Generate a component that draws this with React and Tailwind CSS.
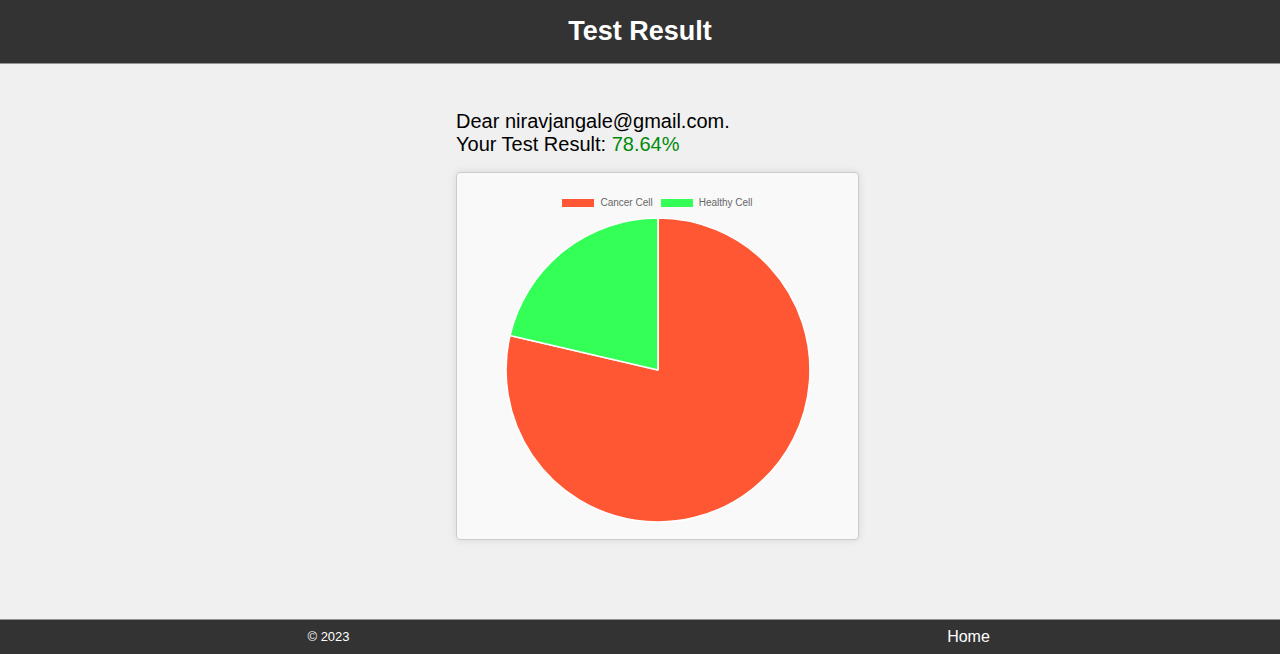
const slices = [
  { label: "Cancer Cell", value: 78.64, color: "#ff5733" },
  { label: "Healthy Cell", value: 21.36, color: "#33ff57" },
];

const RADIUS = 152;

function point(percent) {
  const angle = (percent / 100) * 2 * Math.PI;
  return `${RADIUS * Math.sin(angle)} ${-RADIUS * Math.cos(angle)}`;
}

function PieChart() {
  let start = 0;
  return (
    <svg
      viewBox="-153 -153 306 306"
      className="mx-auto block w-[306px] max-w-full"
      role="img"
      aria-label="Share of cancer and healthy cells"
    >
      {slices.map((slice) => {
        const from = start;
        start += slice.value;
        const large = slice.value > 50 ? 1 : 0;
        return (
          <path
            key={slice.label}
            d={`M0 0 L${point(from)} A${RADIUS} ${RADIUS} 0 ${large} 1 ${point(start)} Z`}
            fill={slice.color}
            stroke="#ffffff"
            strokeWidth="1.6"
            strokeLinejoin="bevel"
          />
        );
      })}
    </svg>
  );
}

export default function App() {
  return (
    <div className="flex min-h-screen flex-col bg-[#f0f0f0] font-['Liberation_Sans',Arial,sans-serif] text-black">
      <header className="border-b border-[#929292] bg-[#333333] py-4 text-center text-white">
        <h1 className="text-[27px] leading-[31px] font-bold">Test Result</h1>
      </header>

      <main className="flex flex-1 flex-col items-center pt-[46px] pl-[35px]">
        <div className="w-full max-w-[403px]">
          <p className="text-[20px] leading-[23px]">
            Dear niravjangale@gmail.com.
            <br />
            Your Test Result: <span className="text-[#008b0b]">78.64%</span>
          </p>

          <section className="mt-4 rounded border border-[#cccccc] bg-[#f9f9f9] pt-6 pb-4 shadow-[0_0_8px_rgba(0,0,0,0.1)]">
            <ul className="mb-2 flex justify-center gap-2 text-[10px] leading-3 text-[#666666]">
              {slices.map((slice) => (
                <li key={slice.label} className="flex items-center gap-1.5">
                  <svg className="h-2 w-8" aria-hidden="true">
                    <rect width="100%" height="100%" fill={slice.color} />
                  </svg>
                  {slice.label}
                </li>
              ))}
            </ul>
            <PieChart />
          </section>
        </div>
      </main>

      <footer className="grid grid-cols-2 items-center border-t border-[#929292] bg-[#333333] py-[5px] text-center leading-6 text-white">
        <p className="pl-[17px] text-[13px]">© 2023</p>
        <p className="pl-[17px] text-[16px]">
          <a href="#home">Home</a>
        </p>
      </footer>
    </div>
  );
}
